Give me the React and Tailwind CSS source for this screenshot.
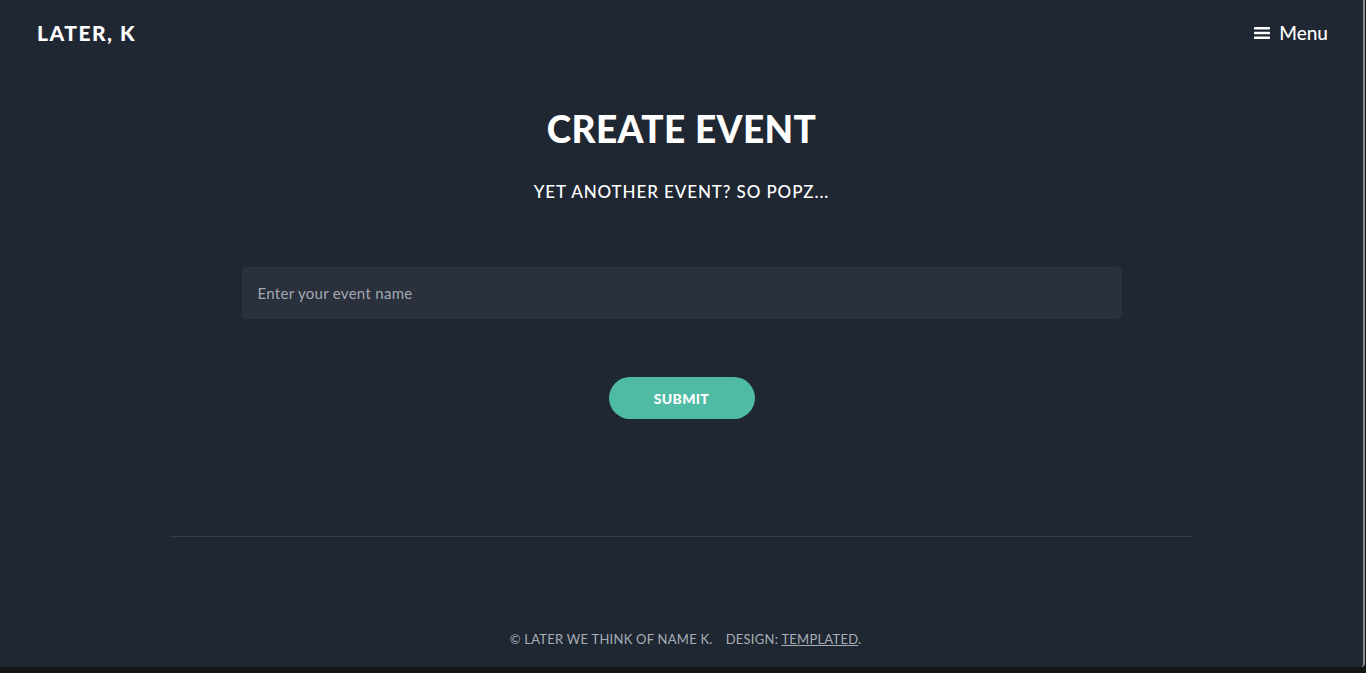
import React from 'react';

const font = { fontFamily: 'Lato, "Open Sans", sans-serif' };

export default function App() {
  return (
    <div className="h-[673px] w-[1366px] bg-[#141714] overflow-hidden" style={font}>
      <div className="h-[667px] w-[1365px] bg-[#1f2732] border-r-2 border-[#8a8f94] rounded-br-[4px] flex flex-col">
        <header className="h-[66px] flex items-center justify-between pl-[37px] pr-[35px]">
          <span className="text-white font-black text-[21px] tracking-[1.5px]">LATER, K</span>
          <button className="flex items-center gap-[9px] text-white text-[19px] font-medium">
            <svg width="16" height="14" viewBox="0 0 16 14" fill="#ffffff">
              <rect x="0" y="1" width="16" height="2.4" rx="0.4" />
              <rect x="0" y="5.8" width="16" height="2.4" rx="0.4" />
              <rect x="0" y="10.6" width="16" height="2.4" rx="0.4" />
            </svg>
            Menu
          </button>
        </header>

        <main className="flex flex-col items-center">
          <h1 className="mt-[40px] text-white font-black text-[37px] leading-[46px] tracking-[0.4px]">CREATE EVENT</h1>
          <p className="mt-[28px] text-white text-[17px] font-medium leading-[24px] tracking-[0.9px]">YET ANOTHER EVENT? SO POPZ...</p>
          <input
            type="text"
            placeholder="Enter your event name"
            className="mt-[63px] w-[880px] h-[52px] rounded-[4px] bg-[#2a303c] pl-[16px] pr-[16px] text-[15px] tracking-[0.3px] text-white placeholder:text-[#a3a8af] outline-none"
            style={font}
          />
          <button className="mt-[58px] w-[146px] h-[42px] rounded-full bg-[#4fbba4] text-white font-black text-[14px] tracking-[0.3px]">
            SUBMIT
          </button>
        </main>

        <div className="mt-[117px] mx-auto w-[1023px] h-px bg-[#353d48]" />

        <footer className="mt-auto mb-[18px] pl-[8px] text-center text-[13px] tracking-[0.25px] text-[#a8aeb5] uppercase">
          © LATER WE THINK OF NAME K.<span className="inline-block w-[13px]" />DESIGN: <a className="underline" href="#">TEMPLATED</a>.
        </footer>
      </div>
    </div>
  );
}
